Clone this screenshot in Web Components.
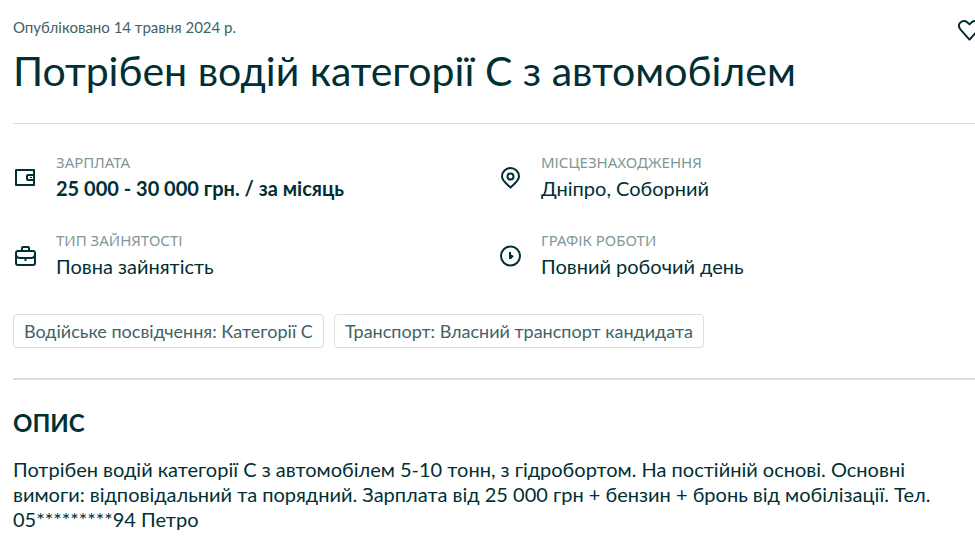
<!DOCTYPE html>
<html lang="uk">
<head>
    <meta charset="utf-8">
    <meta name="viewport" content="width=device-width, initial-scale=1">
    <title>Потрібен водій категорії С з автомобілем</title>
    <style>
        body {
            margin: 0;
            background: #fff;
            color: #002f34;
            font-family: Lato, "Open Sans", sans-serif;
        }
    </style>
</head>
<body>
    <job-page></job-page>

    <script>
        class FavoriteButton extends HTMLElement {
            constructor() {
                super();
                this.attachShadow({mode: 'open'}).innerHTML = `
                    <style>
                        :host {
                            display: block;
                            flex: none;
                        }

                        button {
                            display: block;
                            width: 20px;
                            height: 24px;
                            padding: 0;
                            border: 0;
                            background: none;
                            color: inherit;
                            overflow: hidden;
                            cursor: pointer;
                        }

                        svg {
                            display: block;
                        }
                    </style>
                    <button type="button" aria-label="Додати в обране">
                        <svg width="26" height="24" viewBox="0 0 26 24" fill="none" stroke="currentColor" stroke-width="2">
                            <path d="M14.5 22.6 6 13.2C3.700 10.600 3.500 7.600 5 5.800c1.700-2.200 5.200-2.300 7.200-.6l2.300 2.200 2.300-2.200c2-1.700 5.500-1.600 7.200.6 1.500 1.800 1.300 4.800-1 7.400Z" stroke-linejoin="round"></path>
                        </svg>
                    </button>
                `;
            }
        }

        class JobHeader extends HTMLElement {
            constructor() {
                super();
                this.attachShadow({mode: 'open'}).innerHTML = `
                    <style>
                        :host {
                            display: block;
                            padding-bottom: 28px;
                            border-bottom: 1px solid #d8dfe0;
                        }

                        .top {
                            display: flex;
                            justify-content: space-between;
                            align-items: flex-start;
                            font-size: 15px;
                            line-height: 20px;
                            color: #406367;
                        }

                        favorite-button {
                            color: #002f34;
                        }

                        h1 {
                            margin: 6px 0 0;
                            font-size: 41px;
                            font-weight: 400;
                            line-height: 48px;
                        }
                    </style>
                    <div class="top">
                        <slot name="date"></slot>
                        <favorite-button></favorite-button>
                    </div>
                    <h1><slot></slot></h1>
                `;
            }
        }

        const icons = {
            wallet: `
                <path d="M3 4h18v15H3Z" stroke-linejoin="round"></path>
                <path d="M21 9h-6a1 1 0 0 0-1 1v3a1 1 0 0 0 1 1h6"></path>
                <path d="M17 11.500h2" stroke-width="1"></path>`,
            briefcase: `
                <rect x="3" y="7" width="19" height="14" rx="2"></rect>
                <path d="M9 7V4a1 1 0 0 1 1-1h5a1 1 0 0 1 1 1v3M3 10c0 2.500 1.500 4 4 4h11c2.500 0 4-1.500 4-4M12.500 14v3"></path>`,
            pin: `
                <path d="M12.500 21.500C9 18 4 14.700 4 10.500a8.500 8.500 0 0 1 17 0c0 4.200-5 7.500-8.500 11Z"></path>
                <circle cx="12.500" cy="10.500" r="3"></circle>`,
            clock: `
                <circle cx="12.500" cy="12" r="9.500"></circle>
                <path d="M11 8h2v2.500l3 1.500-3 3h-2Z" fill="currentColor" stroke="none"></path>`
        };

        class JobFact extends HTMLElement {
            connectedCallback() {
                if (this.shadowRoot) return;
                this.attachShadow({mode: 'open'}).innerHTML = `
                    <style>
                        :host {
                            display: flex;
                            align-items: center;
                            gap: 19px;
                        }

                        svg {
                            flex: none;
                        }

                        .label {
                            font-family: "Noto Sans", "Open Sans", sans-serif;
                            font-size: 15px;
                            line-height: 16px;
                            color: #7f9799;
                            text-transform: uppercase;
                        }

                        .value {
                            margin-top: 6px;
                            font-size: 20px;
                            line-height: 25px;
                        }

                        :host([strong]) .value {
                            font-weight: 700;
                        }
                    </style>
                    <svg width="24" height="24" viewBox="0 0 24 24" fill="none" stroke="currentColor" stroke-width="2" aria-hidden="true">${icons[this.getAttribute('icon')]}</svg>
                    <div>
                        <div class="label"><slot name="label"></slot></div>
                        <div class="value"><slot></slot></div>
                    </div>
                `;
            }
        }

        class JobTag extends HTMLElement {
            constructor() {
                super();
                this.attachShadow({mode: 'open'}).innerHTML = `
                    <style>
                        :host {
                            display: block;
                            padding: 4px 10px;
                            border: 1px solid #d8dfe0;
                            border-radius: 4px;
                            font-size: 18px;
                            line-height: 24px;
                            color: #406367;
                        }
                    </style>
                    <slot></slot>
                `;
            }
        }

        class JobDescription extends HTMLElement {
            constructor() {
                super();
                this.attachShadow({mode: 'open'}).innerHTML = `
                    <style>
                        :host {
                            display: block;
                        }

                        h2 {
                            margin: 0 0 18px;
                            font-size: 24px;
                            font-weight: 700;
                            line-height: 32px;
                            text-transform: uppercase;
                        }

                        p {
                            margin: 0;
                            font-size: 20px;
                            line-height: 25px;
                        }
                    </style>
                    <h2><slot name="title"></slot></h2>
                    <p><slot></slot></p>
                `;
            }
        }

        class JobPage extends HTMLElement {
            constructor() {
                super();
                this.attachShadow({mode: 'open'}).innerHTML = `
                    <style>
                        :host {
                            display: block;
                            padding: 17px 0 0 13px;
                        }

                        .facts {
                            display: grid;
                            grid-template-columns: 1fr 1fr;
                            gap: 31px 8px;
                            padding: 30px 0 35px;
                        }

                        .tags {
                            display: flex;
                            flex-wrap: wrap;
                            gap: 10px;
                            padding-bottom: 30px;
                            border-bottom: 2px solid #d8dfe0;
                        }

                        job-description {
                            padding: 27px 32px 0 0;
                        }
                    </style>
                    <main>
                        <job-header>
                            <span slot="date">Опубліковано 14 травня 2024 р.</span>
                            Потрібен водій категорії С з автомобілем
                        </job-header>
                        <div class="facts">
                            <job-fact icon="wallet" strong><span slot="label">Зарплата</span>25 000 - 30 000 грн. / за місяць</job-fact>
                            <job-fact icon="pin"><span slot="label">Місцезнаходження</span>Дніпро, Соборний</job-fact>
                            <job-fact icon="briefcase"><span slot="label">Тип зайнятості</span>Повна зайнятість</job-fact>
                            <job-fact icon="clock"><span slot="label">Графік роботи</span>Повний робочий день</job-fact>
                        </div>
                        <div class="tags">
                            <job-tag>Водійське посвідчення: Категорії С</job-tag>
                            <job-tag>Транспорт: Власний транспорт кандидата</job-tag>
                        </div>
                        <job-description>
                            <span slot="title">Опис</span>
                            Потрібен водій категорії С з автомобілем 5-10 тонн, з гідробортом. На постійній основі. Основні вимоги: відповідальний та порядний. Зарплата від 25 000 грн + бензин + бронь від мобілізації. Тел. 05*********94 Петро
                        </job-description>
                    </main>
                `;
            }
        }

        customElements.define('favorite-button', FavoriteButton);
        customElements.define('job-header', JobHeader);
        customElements.define('job-fact', JobFact);
        customElements.define('job-tag', JobTag);
        customElements.define('job-description', JobDescription);
        customElements.define('job-page', JobPage);
    </script>
</body>
</html>
